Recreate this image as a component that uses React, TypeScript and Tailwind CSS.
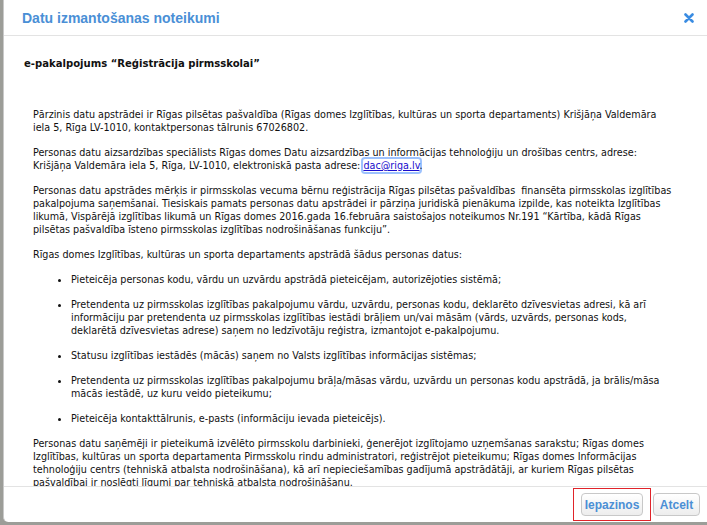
import React from 'react'

const bodyFont = "font-['DejaVu_Sans_Condensed','DejaVu_Sans','Liberation_Sans',sans-serif]"

const bullets: string[][] = [
  ['Pieteicēja personas kodu, vārdu un uzvārdu apstrādā pieteicējam, autorizējoties sistēmā;'],
  [
    'Pretendenta uz pirmsskolas izglītības pakalpojumu vārdu, uzvārdu, personas kodu, deklarēto dzīvesvietas adresi, kā arī',
    'informāciju par pretendenta uz pirmsskolas izglītības iestādi brāļiem un/vai māsām (vārds, uzvārds, personas kods,',
    'deklarētā dzīvesvietas adrese) saņem no Iedzīvotāju reģistra, izmantojot e-pakalpojumu.',
  ],
  ['Statusu izglītības iestādēs (mācās) saņem no Valsts izglītības informācijas sistēmas;'],
  [
    'Pretendenta uz pirmsskolas izglītības pakalpojumu brāļa/māsas vārdu, uzvārdu un personas kodu apstrādā, ja brālis/māsa',
    'mācās iestādē, uz kuru veido pieteikumu;',
  ],
  ['Pieteicēja kontakttālrunis, e-pasts (informāciju ievada pieteicējs).'],
]

const Lines: React.FC<{ lines: string[] }> = ({ lines }) => (
  <>
    {lines.map((l, i) => (
      <React.Fragment key={i}>
        {l}
        {i < lines.length - 1 && <br />}
      </React.Fragment>
    ))}
  </>
)

export default function App() {
  return (
    <div className="w-[707px] h-[525px] bg-[#9c9d98] pl-[3px] pb-[3px] flex overflow-hidden">
      <div className="flex-1 bg-white border-l border-[#c9c9c9] rounded-bl-[5px] flex flex-col min-w-0">
        {/* Header */}
        <div className="h-[36px] shrink-0 border-b border-[#e3e3e3] flex items-center justify-between pl-[18px] pr-[12px]">
          <h1 className="font-['Liberation_Sans',Arial,sans-serif] font-bold text-[14px] text-[#4a8fd6] leading-none">
            Datu izmantošanas noteikumi
          </h1>
          <button className="w-[12px] h-[12px] flex items-center justify-center">
            <svg width="10" height="10" viewBox="0 0 10 10">
              <path d="M1.5 1.5 L8.5 8.5 M8.5 1.5 L1.5 8.5" stroke="#3a8ce2" strokeWidth="2.6" strokeLinecap="round" />
            </svg>
          </button>
        </div>

        {/* Body */}
        <div className={`flex-1 overflow-hidden pt-[21px] pl-[20px] text-[10.7px] leading-[13px] text-[#111] whitespace-nowrap ${bodyFont}`}>
          <p className="font-bold text-[11.2px] mb-[38px]">e-pakalpojums “Reģistrācija pirmsskolai”</p>

          <div className="pl-[9px]">
            <p className="mb-[12px]">
              <Lines
                lines={[
                  'Pārzinis datu apstrādei ir Rīgas pilsētas pašvaldība (Rīgas domes Izglītības, kultūras un sporta departaments) Krišjāņa Valdemāra',
                  'iela 5, Rīga LV-1010, kontaktpersonas tālrunis 67026802.',
                ]}
              />
            </p>

            <p className="mb-[12px]">
              Personas datu aizsardzības speciālists Rīgas domes Datu aizsardzības un informācijas tehnoloģiju un drošības centrs, adrese:
              <br />
              Krišjāņa Valdemāra iela 5, Rīga, LV-1010, elektroniskā pasta adrese:{' '}
              <a href="#" className="text-[#1a0dcc] underline rounded-[2px] shadow-[0_0_0_2px_rgba(77,144,254,0.55)]">
                dac@riga.lv
              </a>
              .
            </p>

            <p className="mb-[12px]">
              <Lines
                lines={[
                  'Personas datu apstrādes mērķis ir pirmsskolas vecuma bērnu reģistrācija Rīgas pilsētas pašvaldības \u00a0finansēta pirmsskolas izglītības',
                  'pakalpojuma saņemšanai. Tiesiskais pamats personas datu apstrādei ir pārziņa juridiskā pienākuma izpilde, kas noteikta Izglītības',
                  'likumā, Vispārējā izglītības likumā un Rīgas domes 2016.gada 16.februāra saistošajos noteikumos Nr.191 “Kārtība, kādā Rīgas',
                  'pilsētas pašvaldība īsteno pirmsskolas izglītības nodrošināšanas funkciju”.',
                ]}
              />
            </p>

            <p className="mb-[12px]">
              Rīgas domes Izglītības, kultūras un sporta departaments apstrādā šādus personas datus:
            </p>

            <ul className="list-disc pl-[38px] mb-[12px] flex flex-col gap-[12px]">
              {bullets.map((b, i) => (
                <li key={i}>
                  <Lines lines={b} />
                </li>
              ))}
            </ul>

            <p>
              <Lines
                lines={[
                  'Personas datu saņēmēji ir pieteikumā izvēlēto pirmsskolu darbinieki, ģenerējot izglītojamo uzņemšanas sarakstu; Rīgas domes',
                  'Izglītības, kultūras un sporta departamenta Pirmsskolu rindu administratori, reģistrējot pieteikumu; Rīgas domes Informācijas',
                  'tehnoloģiju centrs (tehniskā atbalsta nodrošināšana), kā arī nepieciešamības gadījumā apstrādātāji, ar kuriem Rīgas pilsētas',
                  'pašvaldībai ir noslēgti līgumi par tehniskā atbalsta nodrošināšanu.',
                ]}
              />
            </p>
          </div>
        </div>

        {/* Footer */}
        <div className="h-[36px] shrink-0 border-t border-[#e3e3e3] flex items-center justify-end pr-[7px] font-['Liberation_Sans',Arial,sans-serif]">
          <div className="h-[33px] border border-[#e0242a] px-[7px] flex items-center">
            <button className="w-[62px] h-[23px] rounded-[4px] border border-[#c8c8c8] bg-gradient-to-b from-white to-[#ededed] text-[12px] font-bold text-[#4b8fd5] flex items-center justify-center">
              Iepazinos
            </button>
          </div>
          <button className="ml-[2px] w-[47px] h-[23px] rounded-[4px] border border-[#c8c8c8] bg-gradient-to-b from-white to-[#ededed] text-[12px] font-bold text-[#4b8fd5] flex items-center justify-center">
            Atcelt
          </button>
        </div>
      </div>
    </div>
  )
}
